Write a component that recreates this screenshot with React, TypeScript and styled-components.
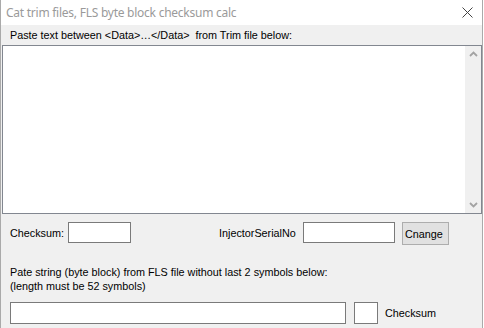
import React from "react";
import styled, { createGlobalStyle } from "styled-components";

const GlobalStyle = createGlobalStyle`
  html, body {
    margin: 0;
    padding: 0;
    background: #ffffff;
    overflow: hidden;
  }
`;

const Window = styled.div`
  width: 481px;
  height: 340px;
  border-left: 1px solid #aaaaaa;
  border-right: 1px solid #aaaaaa;
  display: flex;
  flex-direction: column;
  font-family: "Liberation Sans", Arial, sans-serif;
  font-size: 10.8px;
  color: #000000;
`;

const TitleBar = styled.div`
  height: 25px;
  flex: none;
  background: #ffffff;
  display: flex;
  align-items: center;
  justify-content: space-between;
  padding-left: 5px;
`;

const Title = styled.span`
  font-family: "Noto Sans", "Open Sans", sans-serif;
  font-size: 12px;
  letter-spacing: -0.25px;
  color: #9a9a9a;
`;

const CloseButton = styled.div`
  width: 28px;
  height: 25px;
  display: flex;
  align-items: center;
  justify-content: center;
  margin-right: 1px;
`;

const Client = styled.div`
  flex: 1;
  background: #f0f0f0;
  display: flex;
  flex-direction: column;
`;

const Label = styled.span<{ $width?: number; $left?: number }>`
  display: inline-block;
  flex: none;
  white-space: nowrap;
  width: ${(p) => (p.$width ? `${p.$width}px` : "auto")};
  margin-left: ${(p) => p.$left ?? 0}px;
`;

const Caption = styled.div`
  height: 20px;
  display: flex;
  align-items: center;
  padding-left: 9px;
  white-space: pre;
`;

const Memo = styled.div`
  height: 167px;
  margin-left: 1px;
  border: 1px solid #828790;
  background: #ffffff;
  display: flex;
  justify-content: flex-end;
`;

const ScrollBar = styled.div`
  width: 16px;
  background: #f0f0f0;
  display: flex;
  flex-direction: column;
  justify-content: space-between;
`;

const ScrollArrow = styled.div`
  height: 16px;
  display: flex;
  align-items: center;
  justify-content: center;
`;

const Row = styled.div<{ $top: number }>`
  display: flex;
  align-items: center;
  padding-left: 9px;
  margin-top: ${(p) => p.$top}px;
`;

const Edit = styled.div<{ $width: number; $height?: number; $left?: number }>`
  flex: none;
  width: ${(p) => p.$width}px;
  height: ${(p) => p.$height ?? 21}px;
  box-sizing: border-box;
  border: 1px solid #7a7a7a;
  background: #ffffff;
  margin-left: ${(p) => p.$left ?? 0}px;
`;

const Button = styled.div`
  flex: none;
  width: 47px;
  height: 23px;
  box-sizing: border-box;
  margin-left: 7px;
  margin-top: 2px;
  border: 1px solid #adadad;
  background: #e1e1e1;
  display: flex;
  align-items: center;
  padding-left: 2px;
`;

const Note = styled.div`
  padding-left: 9px;
  margin-top: 20px;
  line-height: 14px;
`;

const Chevron = ({ up }: { up?: boolean }) => (
  <svg width="9" height="6" viewBox="0 0 9 6">
    <path
      d={up ? "M1 5 L4.5 1.5 L8 5" : "M1 1 L4.5 4.5 L8 1"}
      fill="none"
      stroke="#a3a3a3"
      strokeWidth="1.8"
    />
  </svg>
);

export default function App() {
  return (
    <>
      <GlobalStyle />
      <Window>
        <TitleBar>
          <Title>Cat trim files, FLS byte block checksum calc</Title>
          <CloseButton>
            <svg width="11" height="11" viewBox="0 0 11 11">
              <path d="M0.5 0.5 L10.5 10.5 M10.5 0.5 L0.5 10.5" stroke="#444" strokeWidth="1" />
            </svg>
          </CloseButton>
        </TitleBar>
        <Client>
          <Caption>{"Paste text between <Data>…</Data>  from Trim file below:"}</Caption>
          <Memo>
            <ScrollBar>
              <ScrollArrow>
                <Chevron up />
              </ScrollArrow>
              <ScrollArrow>
                <Chevron />
              </ScrollArrow>
            </ScrollBar>
          </Memo>
          <Row $top={6}>
            <Label $width={58}>Checksum:</Label>
            <Edit $width={63} />
            <Label $width={84} $left={88}>
              InjectorSerialNo
            </Label>
            <Edit $width={92} />
            <Button>Cnange</Button>
          </Row>
          <Note>
            Pate string (byte block) from FLS file without last 2 symbols below:
            <br />
            (length must be 52 symbols)
          </Note>
          <Row $top={9}>
            <Edit $width={336} $height={22} />
            <Edit $width={24} $height={22} $left={8} />
            <Label $left={7}>Checksum</Label>
          </Row>
        </Client>
      </Window>
    </>
  );
}
